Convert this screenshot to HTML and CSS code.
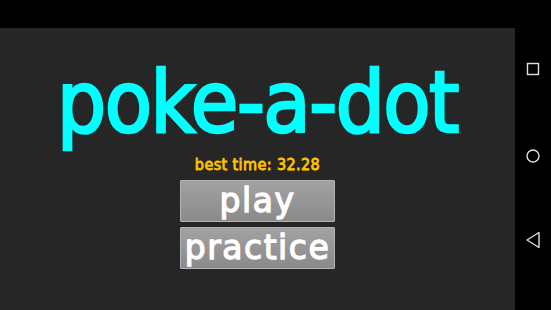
FILE: index.html
```html
<!DOCTYPE html>
<html lang="en">
<head>
    <meta charset="UTF-8">
    <meta name="viewport" content="width=device-width, initial-scale=1.0">
    <title>poke-a-dot</title>
    <link rel="stylesheet" href="styles.css">
</head>
<body>

    <div class="status-bar"></div>
    <div class="screen">
        <main class="game">
            <h1 class="title">poke-a-dot</h1>
            <p class="best">best time: 32.28</p>
            <button type="button" class="menu-btn">play</button>
            <button type="button" class="menu-btn">practice</button>
        </main>
        <nav class="nav-bar">
            <svg class="nav-icon" viewBox="0 0 16 16" width="16" height="16">
                <rect x="2.5" y="2.5" width="11" height="11" fill="none" stroke="#e0e0e0" stroke-width="1.4"/>
            </svg>
            <svg class="nav-icon" viewBox="0 0 16 16" width="16" height="16">
                <circle cx="8" cy="8" r="6" fill="none" stroke="#e0e0e0" stroke-width="1.4"/>
            </svg>
            <svg class="nav-icon back" viewBox="0 0 16 18" width="16" height="18">
                <polygon points="14,1.5 14,16.5 2,9" fill="none" stroke="#e0e0e0" stroke-width="1.4" stroke-linejoin="round"/>
            </svg>
        </nav>
    </div>

</body>
</html>
```

FILE: styles.css
```css
body {
    margin: 0;
    background-color: #000;
    font-family: "DejaVu Sans", sans-serif;
    overflow: hidden;
}
.status-bar {
    height: 28px;
    background-color: #000;
}
.screen {
    display: flex;
    height: 282px;
}
.game {
    flex: 1;
    display: flex;
    flex-direction: column;
    align-items: center;
    padding-top: 31px;
    background-color: #262626;
}
.title {
    margin: 0;
    font-family: "DejaVu Sans Condensed", "DejaVu Sans", sans-serif;
    font-weight: normal;
    font-size: 86px;
    line-height: 86px;
    letter-spacing: -1.5px;
    color: #00ffff;
    -webkit-text-stroke: 2.6px #00ffff;
    text-shadow: 0 0 1.5px #000, 0 0 1px #000;
}
.best {
    margin: 10px 0 0;
    font-family: "DejaVu Sans Condensed", "DejaVu Sans", sans-serif;
    font-size: 16px;
    line-height: 20px;
    letter-spacing: 0.4px;
    color: #ffc400;
    -webkit-text-stroke: 0.8px #ffc400;
}
.menu-btn {
    width: 155px;
    height: 42px;
    margin-top: 5px;
    padding: 0;
    overflow: hidden;
    font-family: "DejaVu Sans", sans-serif;
    font-size: 33px;
    line-height: 40px;
    letter-spacing: 1.5px;
    color: #fff;
    -webkit-text-stroke: 1.3px #fff;
    background: linear-gradient(#a2a2a2, #8a8a8a);
    border: 1px solid #b4b4b4;
    border-radius: 1px;
    cursor: pointer;
}
.menu-btn + .menu-btn {
    margin-top: 5px;
}
.nav-bar {
    width: 36px;
    display: flex;
    flex-direction: column;
    align-items: center;
    padding-top: 33px;
    gap: 71px;
    background-color: #000;
}
.nav-icon {
    display: block;
}
.nav-icon.back {
    margin-top: -4px;
}
```
